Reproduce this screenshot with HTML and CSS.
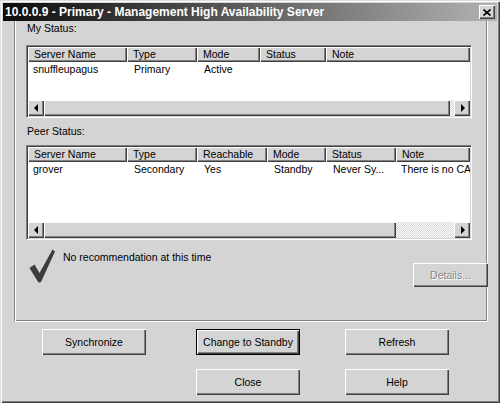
FILE: index.html
```html
<!DOCTYPE html>
<html>
<head>
<meta charset="utf-8">
<title>Management High Availability Server</title>
<link rel="stylesheet" href="styles.css">
</head>
<body>
<div class="window">
  <div class="titlebar">
    <span class="title">10.0.0.9 - Primary - Management High Availability Server</span>
    <span class="close"><svg width="8" height="7" viewBox="0 0 8 7"><path d="M0.5 0.5 L7.5 6.5 M7.5 0.5 L0.5 6.5" stroke="#000" stroke-width="1.6" fill="none"/></svg></span>
  </div>
  <div class="group">
    <div class="label label-my">My Status:</div>
    <div class="list list-my">
      <div class="hdr cols-my">
        <div class="hc">Server Name</div>
        <div class="hc">Type</div>
        <div class="hc">Mode</div>
        <div class="hc">Status</div>
        <div class="hc">Note</div>
      </div>
      <div class="rows">
        <div class="row cols-my">
          <div class="cell">snuffleupagus</div>
          <div class="cell">Primary</div>
          <div class="cell">Active</div>
          <div class="cell"></div>
          <div class="cell"></div>
        </div>
      </div>
      <div class="sb">
        <div class="sbtn"><span class="arr-l"></span></div>
        <div class="track"><div class="thumb thumb-my"></div></div>
        <div class="sbtn"><span class="arr-r"></span></div>
      </div>
    </div>
    <div class="label label-peer">Peer Status:</div>
    <div class="list list-peer">
      <div class="hdr cols-peer">
        <div class="hc">Server Name</div>
        <div class="hc">Type</div>
        <div class="hc">Reachable</div>
        <div class="hc">Mode</div>
        <div class="hc">Status</div>
        <div class="hc">Note</div>
      </div>
      <div class="rows">
        <div class="row cols-peer">
          <div class="cell">grover</div>
          <div class="cell">Secondary</div>
          <div class="cell">Yes</div>
          <div class="cell">Standby</div>
          <div class="cell">Never Sy...</div>
          <div class="cell cell-note">There is no CA</div>
        </div>
      </div>
      <div class="sb">
        <div class="sbtn"><span class="arr-l"></span></div>
        <div class="track"><div class="thumb thumb-peer"></div></div>
        <div class="sbtn"><span class="arr-r"></span></div>
      </div>
    </div>
    <div class="reco">
      <svg class="check" width="28" height="36" viewBox="0 0 28 36">
        <path d="M1.5 20 L6.5 16.5 L11.5 25 L24.5 1.5 L27 3.5 L13.5 33 Q11.5 36 9.5 33 Z" fill="#3c3c3c"/>
      </svg>
      <div class="reco-text">No recommendation at this time</div>
      <div class="btn details">Details...</div>
    </div>
  </div>
  <div class="buttons">
    <div class="btn c1 r1">Synchronize</div>
    <div class="btn default c3 r1">Change to Standby</div>
    <div class="btn c5 r1">Refresh</div>
    <div class="btn c3 r2">Close</div>
    <div class="btn c5 r2">Help</div>
  </div>
</div>
</body>
</html>
```
FILE: styles.css
```css
* { box-sizing: border-box; }
html, body { margin: 0; padding: 0; }
body {
  width: 500px;
  height: 403px;
  overflow: hidden;
  background: #d4d4d4;
  font-family: "Liberation Sans", Arial, sans-serif;
  font-size: 10.5px;
  color: #000;
}
.window {
  width: 500px;
  height: 403px;
  padding: 3px;
  background: #d4d4d4;
  box-shadow: inset 1px 1px 0 #dcdcdc, inset 2px 2px 0 #fff, inset -1px -1px 0 #404040, inset -2px -2px 0 #808080;
  display: flex;
  flex-direction: column;
}
.titlebar {
  height: 18px;
  flex: none;
  display: flex;
  align-items: center;
  justify-content: space-between;
  padding: 0 2px 0 2px;
  background: linear-gradient(to right, #0c0c0c, #b2b2b2);
}
.title {
  color: #fff;
  font-weight: bold;
  font-size: 12px;
  white-space: nowrap;
}
.close {
  width: 16px;
  height: 14px;
  display: flex;
  align-items: center;
  justify-content: center;
  background: #d4d4d4;
  box-shadow: inset 1px 1px 0 #fff, inset -1px -1px 0 #404040, inset -2px -2px 0 #808080;
}
.group {
  flex: none;
  margin-left: 11px;
  width: 474px;
  height: 301px;
  padding-left: 11px;
  border-left: 1px solid #808080;
  border-right: 1px solid #fff;
  border-bottom: 1px solid #fff;
  box-shadow: inset 1px 0 0 #fff, inset -1px 0 0 #808080, inset 0 -1px 0 #808080;
  display: flex;
  flex-direction: column;
}
.label {
  line-height: 14px;
  height: 14px;
  padding-left: 1px;
}
.label-my { margin-top: 0; }
.label-peer { margin-top: 6px; }
.list {
  width: 446px;
  background: #fff;
  border: 1px solid;
  border-color: #808080 #fff #fff #808080;
  box-shadow: inset 1px 1px 0 #404040, inset -1px -1px 0 #d4d4d4;
  padding: 1px;
  display: flex;
  flex-direction: column;
  overflow: hidden;
}
.list-my { margin-top: 10px; height: 73px; }
.list-peer { margin-top: 7px; height: 95px; }
.cols-my { display: grid; grid-template-columns: 99px 70px 63px 66px 1fr; }
.cols-peer { display: grid; grid-template-columns: 99px 70px 70px 59px 70px 1fr; }
.hdr { height: 15px; flex: none; }
.hc {
  background: #d4d4d4;
  box-shadow: inset 1px 1px 0 #fff, inset -1px -1px 0 #404040, inset -2px -2px 0 #808080;
  line-height: 14px;
  padding-left: 6px;
  white-space: nowrap;
  overflow: hidden;
}
.rows { flex: 1; overflow: hidden; }
.row { height: 15px; }
.cell {
  line-height: 15px;
  padding-left: 7px;
  white-space: nowrap;
  overflow: hidden;
}
.cell:first-child { padding-left: 5px; }
.cell-note { padding-left: 5px; }
.sb { display: flex; height: 16px; flex: none; }
.sbtn {
  width: 16px;
  height: 16px;
  flex: none;
  background: #d4d4d4;
  box-shadow: inset 1px 1px 0 #fff, inset -1px -1px 0 #404040, inset -2px -2px 0 #808080;
  display: flex;
  align-items: center;
  justify-content: center;
}
.arr-l {
  width: 0; height: 0;
  border-top: 4px solid transparent;
  border-bottom: 4px solid transparent;
  border-right: 4px solid #000;
  margin-right: 1px;
}
.arr-r {
  width: 0; height: 0;
  border-top: 4px solid transparent;
  border-bottom: 4px solid transparent;
  border-left: 4px solid #000;
  margin-left: 1px;
}
.track {
  flex: 1;
  background-color: #fff;
  background-image: repeating-conic-gradient(#d4d4d4 0 25%, #fff 0 50%);
  background-size: 2px 2px;
}
.thumb {
  height: 16px;
  background: #d4d4d4;
  box-shadow: inset 1px 1px 0 #fff, inset -1px -1px 0 #404040, inset -2px -2px 0 #808080;
}
.thumb-my { width: 406px; }
.thumb-peer { width: 352px; }
.reco {
  flex: 1;
  display: flex;
  align-items: flex-start;
}
.check { margin-left: 2px; margin-top: 8px; flex: none; }
.reco-text { margin-left: 7px; margin-top: 10px; line-height: 14px; }
.btn {
  height: 26px;
  background: #d4d4d4;
  box-shadow: inset 1px 1px 0 #fff, inset -1px -1px 0 #404040, inset -2px -2px 0 #808080;
  display: flex;
  align-items: center;
  justify-content: center;
  white-space: nowrap;
}
.details {
  margin-left: auto;
  margin-right: -1px;
  margin-top: 23px;
  width: 75px;
  height: 24px;
  color: #888;
  text-shadow: 1px 1px 0 #fff;
}
.default {
  box-shadow: inset 0 0 0 1px #000, inset 2px 2px 0 #fff, inset -2px -2px 0 #404040, inset -3px -3px 0 #808080;
}
.buttons {
  display: grid;
  grid-template-columns: 104px 50px 104px 45px 104px;
  grid-template-rows: 26px 26px;
  row-gap: 14px;
  margin-top: 7px;
  padding-left: 39px;
}
.c1 { grid-column: 1; }
.c3 { grid-column: 3; }
.c5 { grid-column: 5; }
.r1 { grid-row: 1; }
.r2 { grid-row: 2; }
```
